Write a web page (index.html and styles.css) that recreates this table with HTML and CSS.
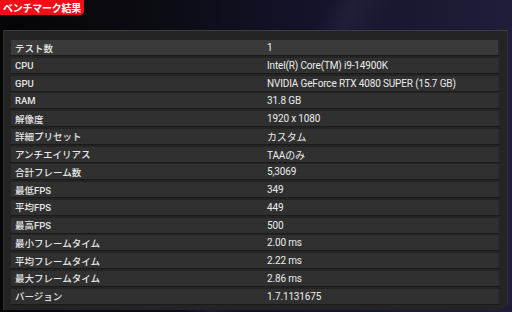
FILE: index.html
```html
<!DOCTYPE html>
<html lang="ja"><head><meta charset="utf-8"><link rel="stylesheet" href="styles.css"></head>
<body>
<div class="screen">
  <div class="top">
    <div class="tab">ベンチマーク結果</div>
  </div>
  <div class="panel">
    <div class="row hl"><span class="k">テスト数</span><span class="v">1</span></div>
    <div class="row"><span class="k">CPU</span><span class="v">Intel(R) Core(TM) i9-14900K</span></div>
    <div class="row"><span class="k">GPU</span><span class="v">NVIDIA GeForce RTX 4080 SUPER (15.7 GB)</span></div>
    <div class="row"><span class="k">RAM</span><span class="v">31.8 GB</span></div>
    <div class="row"><span class="k">解像度</span><span class="v">1920 x 1080</span></div>
    <div class="row"><span class="k">詳細プリセット</span><span class="v">カスタム</span></div>
    <div class="row"><span class="k">アンチエイリアス</span><span class="v">TAAのみ</span></div>
    <div class="row"><span class="k">合計フレーム数</span><span class="v">5,3069</span></div>
    <div class="row"><span class="k">最低FPS</span><span class="v">349</span></div>
    <div class="row"><span class="k">平均FPS</span><span class="v">449</span></div>
    <div class="row"><span class="k">最高FPS</span><span class="v">500</span></div>
    <div class="row"><span class="k">最小フレームタイム</span><span class="v">2.00 ms</span></div>
    <div class="row"><span class="k">平均フレームタイム</span><span class="v">2.22 ms</span></div>
    <div class="row"><span class="k">最大フレームタイム</span><span class="v">2.86 ms</span></div>
    <div class="row"><span class="k">バージョン</span><span class="v">1.7.1131675</span></div>
  </div>
</div>
</body></html>
```
FILE: styles.css
```css
html,body{margin:0;padding:0}
body{
  width:512px;height:312px;overflow:hidden;
  background:#08080c;
  font-family:"Roboto","Noto Sans CJK JP",sans-serif;
  color:#ececec;
}
.screen{
  width:512px;height:312px;
  display:flex;flex-direction:column;
  background:
    linear-gradient(115deg, transparent 50%, rgba(60,58,95,0.25) 54%, transparent 60%),
    linear-gradient(90deg,#050508 0%,#0b0b12 30%,#14132a 60%,#1f1d3a 100%);
}
.top{height:30px;flex:none}
.tab{
  width:84px;height:16px;
  background:#f20d17;
  color:#fff;
  font-family:"Noto Sans CJK JP",sans-serif;
  font-weight:700;font-size:10px;line-height:16px;
  padding-left:3px;box-sizing:border-box;
  letter-spacing:-0.25px;
  clip-path:polygon(0 0,100% 0,100% 12px,81px 100%,0 100%);
  border-bottom:1px solid #000;
}
.panel{
  flex:1;
  margin:0 4px 2px 3px;
  background:#242424;
  border-top:1px solid #3c3c3c;
  border-left:1px solid #2e2e2e;
  border-right:1px solid #333;
  padding:9px 7px 0 7px;
  display:flex;flex-direction:column;gap:1.75px;
  clip-path:polygon(0 0,100% 0,100% calc(100% - 6px),calc(100% - 6px) 100%,0 100%);
}
.row{
  height:16px;flex:none;
  display:grid;grid-template-columns:256px 1fr;
  align-items:center;
  background:#303030;
  border-bottom:1px solid #1a1a1a;
  box-shadow:inset -2px 0 0 #282828;
  box-sizing:border-box;
  font-size:10px;
}
.row.hl{background:#3a3a3a}
.k{
  padding-left:4px;
  font-family:"Roboto","Noto Sans CJK JP",sans-serif;
  font-weight:500;font-size:9.5px;
  color:#e6e6e6;
}
.v{
  font-family:"Roboto","Noto Sans CJK JP",sans-serif;
  font-size:10px;letter-spacing:-0.15px;color:#ececec;
}
```
